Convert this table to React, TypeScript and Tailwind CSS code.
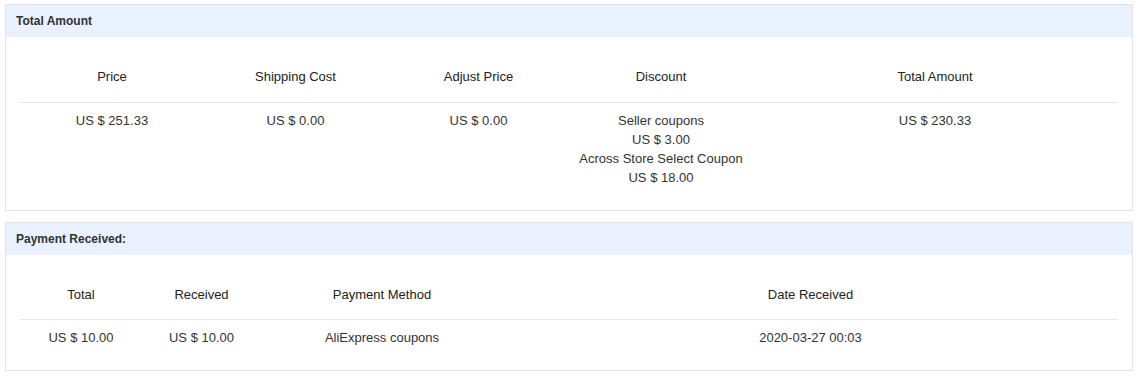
import React from "react";

type Col = { label: string; width: string };

function Panel({ title, children }: { title: string; children: React.ReactNode }) {
    return (
        <div className="border border-[#e3e3e3] bg-white">
            <div className="h-[32px] bg-[#e8f1fd] px-[10px] flex items-center text-[12px] font-bold text-[#333]">
                {title}
            </div>
            <div className="px-[14px] pt-[15px] pb-[15px]">{children}</div>
        </div>
    );
}

function Table({ cols, rows }: { cols: Col[]; rows: React.ReactNode[][] }) {
    return (
        <table className="w-full table-fixed border-collapse text-[13px] leading-[19px]">
            <colgroup>
                {cols.map((c) => (
                    <col key={c.label} className={c.width} />
                ))}
            </colgroup>
            <thead>
                <tr className="border-b border-[#e6e6e6]">
                    {cols.map((c) => (
                        <th key={c.label} className="h-[50px] font-normal text-center text-[#222] align-middle">
                            {c.label}
                        </th>
                    ))}
                </tr>
            </thead>
            <tbody>
                {rows.map((row, i) => (
                    <tr key={i}>
                        {row.map((cell, j) => (
                            <td key={j} className="pt-[8px] pb-[8px] text-center align-top text-[#333]">
                                {cell}
                            </td>
                        ))}
                    </tr>
                ))}
            </tbody>
        </table>
    );
}

export default function App() {
    const amountCols: Col[] = [
        { label: "Price", width: "w-[184px]" },
        { label: "Shipping Cost", width: "w-[183px]" },
        { label: "Adjust Price", width: "w-[183px]" },
        { label: "Discount", width: "w-[182px]" },
        { label: "Total Amount", width: "w-auto" },
    ];

    const paymentCols: Col[] = [
        { label: "Total", width: "w-[122px]" },
        { label: "Received", width: "w-[119px]" },
        { label: "Payment Method", width: "w-[242px]" },
        { label: "Date Received", width: "w-auto" },
    ];

    return (
        <div
            className="bg-white pl-[5px] pr-[6px] pt-[4px] pb-[10px] flex flex-col gap-[11px]"
            style={{ fontFamily: '"Liberation Sans", Arial, sans-serif' }}
        >
            <Panel title="Total Amount">
                <Table
                    cols={amountCols}
                    rows={[
                        [
                            "US $ 251.33",
                            "US $ 0.00",
                            "US $ 0.00",
                            <div key="d">
                                <div>Seller coupons</div>
                                <div>US $ 3.00</div>
                                <div>Across Store Select Coupon</div>
                                <div>US $ 18.00</div>
                            </div>,
                            "US $ 230.33",
                        ],
                    ]}
                />
            </Panel>

            <Panel title="Payment Received:">
                <Table
                    cols={paymentCols}
                    rows={[["US $ 10.00", "US $ 10.00", "AliExpress coupons", "2020-03-27 00:03"]]}
                />
            </Panel>
        </div>
    );
}
